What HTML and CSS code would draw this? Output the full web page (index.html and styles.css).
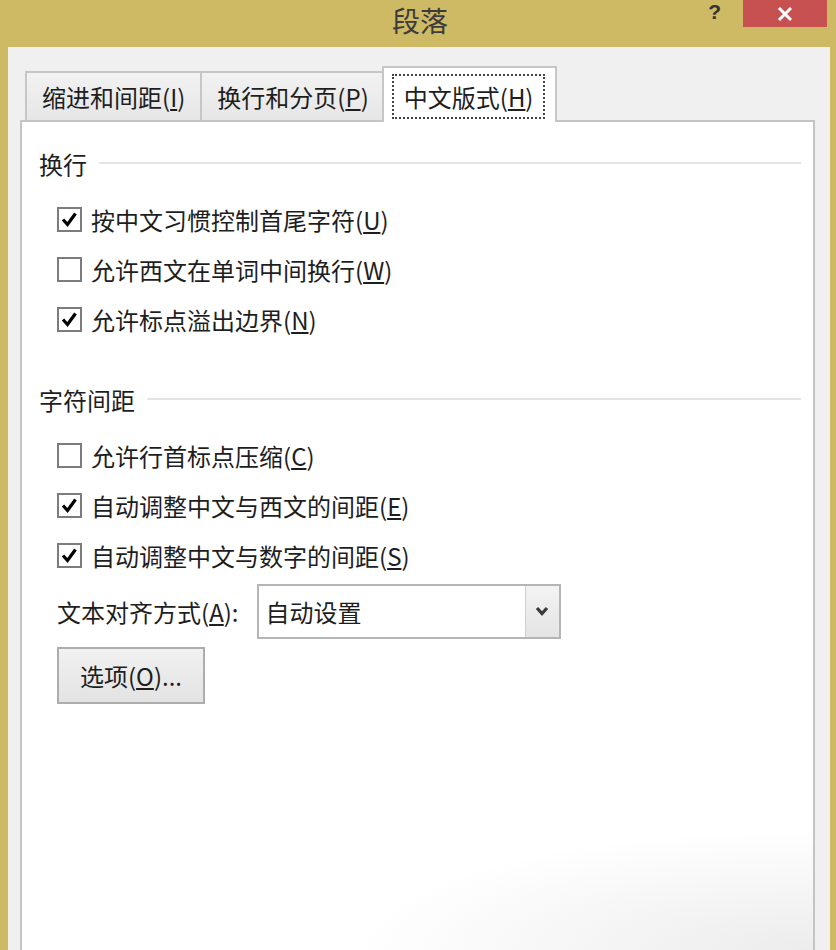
FILE: index.html
```html
<!DOCTYPE html>
<html lang="zh-CN">
<head>
    <meta charset="UTF-8">
    <title>段落</title>
    <link rel="stylesheet" href="styles.css">
</head>
<body>
    <div class="window">
        <div class="titlebar">
            <div></div>
            <div class="title">段落</div>
            <div class="controls">
                <span class="help">?</span>
                <span class="close">
                    <svg width="16" height="16" viewBox="0 0 16 16"><path d="M2 2 L14 14 M14 2 L2 14" stroke="#fff" stroke-width="3" fill="none"/></svg>
                </span>
            </div>
        </div>
        <div class="client">
            <div class="tabs">
                <div class="tab">缩进和间距(<u>I</u>)</div>
                <div class="tab">换行和分页(<u>P</u>)</div>
                <div class="tab active"><span class="focus">中文版式(<u>H</u>)</span></div>
            </div>
            <div class="panel">
                <div class="group-title"><span>换行</span><i class="rule"></i></div>
                <div class="check-row"><span class="box checked"><svg viewBox="0 0 21 21"><path d="M4 10.5 L8.5 15.5 L16.5 4.5" stroke="#000" stroke-width="3.2" fill="none"/></svg></span>按中文习惯控制首尾字符(<u>U</u>)</div>
                <div class="check-row"><span class="box"></span>允许西文在单词中间换行(<u>W</u>)</div>
                <div class="check-row"><span class="box checked"><svg viewBox="0 0 21 21"><path d="M4 10.5 L8.5 15.5 L16.5 4.5" stroke="#000" stroke-width="3.2" fill="none"/></svg></span>允许标点溢出边界(<u>N</u>)</div>

                <div class="group-title second"><span>字符间距</span><i class="rule"></i></div>
                <div class="check-row"><span class="box"></span>允许行首标点压缩(<u>C</u>)</div>
                <div class="check-row"><span class="box checked"><svg viewBox="0 0 21 21"><path d="M4 10.5 L8.5 15.5 L16.5 4.5" stroke="#000" stroke-width="3.2" fill="none"/></svg></span>自动调整中文与西文的间距(<u>E</u>)</div>
                <div class="check-row"><span class="box checked"><svg viewBox="0 0 21 21"><path d="M4 10.5 L8.5 15.5 L16.5 4.5" stroke="#000" stroke-width="3.2" fill="none"/></svg></span>自动调整中文与数字的间距(<u>S</u>)</div>

                <div class="align-row">
                    <span>文本对齐方式(<u>A</u>):</span>
                    <div class="select">
                        <span class="value">自动设置</span>
                        <span class="drop"><svg width="14" height="10" viewBox="0 0 14 10"><path d="M2 2 L7 7.5 L12 2" stroke="#3a3a3a" stroke-width="3.2" fill="none"/></svg></span>
                    </div>
                </div>
                <div class="btn">选项(<u>O</u>)...</div>
            </div>
        </div>
    </div>
</body>
</html>
```

FILE: styles.css
```css
body {
    margin: 0;
    font-family: "Noto Sans CJK SC", "Liberation Sans", sans-serif;
    color: #1e1e1e;
}

.window {
    width: 836px;
    height: 950px;
    background-color: #ceb965;
    display: flex;
    flex-direction: column;
    overflow: hidden;
}

.titlebar {
    height: 47px;
    flex-shrink: 0;
    display: grid;
    grid-template-columns: 1fr auto 1fr;
}

.title {
    font-size: 28px;
    line-height: 41px;
    color: #3c3c3c;
    padding-left: 4px;
}

.controls {
    display: flex;
    justify-content: flex-end;
    align-items: flex-start;
    padding-right: 9px;
}

.help {
    font-family: "Liberation Sans", sans-serif;
    font-weight: bold;
    font-size: 21px;
    line-height: 24px;
    color: #333;
    margin-right: 22px;
}

.close {
    width: 84px;
    height: 27px;
    background-color: #c75050;
    display: flex;
    align-items: center;
    justify-content: center;
}

.client {
    flex: 1;
    margin: 0 6px 0 8px;
    background-color: #f0f0f0;
    padding: 19px 15px 0 12px;
    display: flex;
    flex-direction: column;
}

.tabs {
    display: flex;
    align-items: flex-end;
    padding-left: 5px;
}

.tab {
    height: 47px;
    padding: 0 15px;
    border: 2px solid #c6c6c6;
    border-bottom: none;
    background: linear-gradient(#f2f2f2, #e6e6e6);
    font-size: 24px;
    line-height: 48px;
    white-space: nowrap;
}

.tab + .tab {
    margin-left: -2px;
    padding: 0 15px;
}

.tab.active {
    height: 54px;
    margin-left: -4px;
    margin-bottom: -2px;
    background: #fff;
    padding: 0 10px 0 8px;
    position: relative;
    z-index: 1;
    line-height: normal;
}

.focus {
    display: block;
    margin-top: 6px;
    height: 41px;
    line-height: 41px;
    padding: 0 10px;
    border: 2px dotted #444;
}

.panel {
    flex: 1;
    background-color: #fff;
    background-image: radial-gradient(ellipse 460px 120px at 100% 100%, #ececec, rgba(255, 255, 255, 0) 100%);
    border: 2px solid #c4c4c4;
    border-bottom: none;
    padding: 16px 12px 0 17px;
}

.group-title {
    height: 50px;
    display: flex;
    align-items: center;
    font-size: 24px;
    margin-bottom: 6px;
}

.group-title.second {
    margin-top: 30px;
}

.rule {
    flex: 1;
    height: 2px;
    background-color: #e4e4e4;
    margin-left: 12px;
}

.check-row {
    height: 50px;
    display: flex;
    align-items: center;
    padding-left: 18px;
    font-size: 24px;
    white-space: nowrap;
}

.box {
    width: 21px;
    height: 21px;
    border: 2px solid #7c7c7c;
    background-color: #fff;
    margin-right: 9px;
    display: flex;
}

.box svg {
    width: 21px;
    height: 21px;
}

.align-row {
    height: 56px;
    margin-top: 3px;
    display: flex;
    align-items: center;
    padding-left: 18px;
    font-size: 24px;
    white-space: nowrap;
}

.select {
    width: 300px;
    height: 51px;
    margin-left: 18px;
    border: 2px solid #b5b5b5;
    display: flex;
    align-items: stretch;
}

.select .value {
    flex: 1;
    padding-left: 7px;
    line-height: 51px;
}

.drop {
    width: 33px;
    border-left: 1px solid #cfcfcf;
    background: linear-gradient(#f3f3f3, #e4e4e4);
    display: flex;
    align-items: center;
    justify-content: center;
}

.btn {
    width: 144px;
    height: 53px;
    margin: 8px 0 0 18px;
    border: 2px solid #adadad;
    background: linear-gradient(#f1f1f1, #e3e3e3);
    font-size: 24px;
    line-height: 53px;
    text-align: center;
}
```
